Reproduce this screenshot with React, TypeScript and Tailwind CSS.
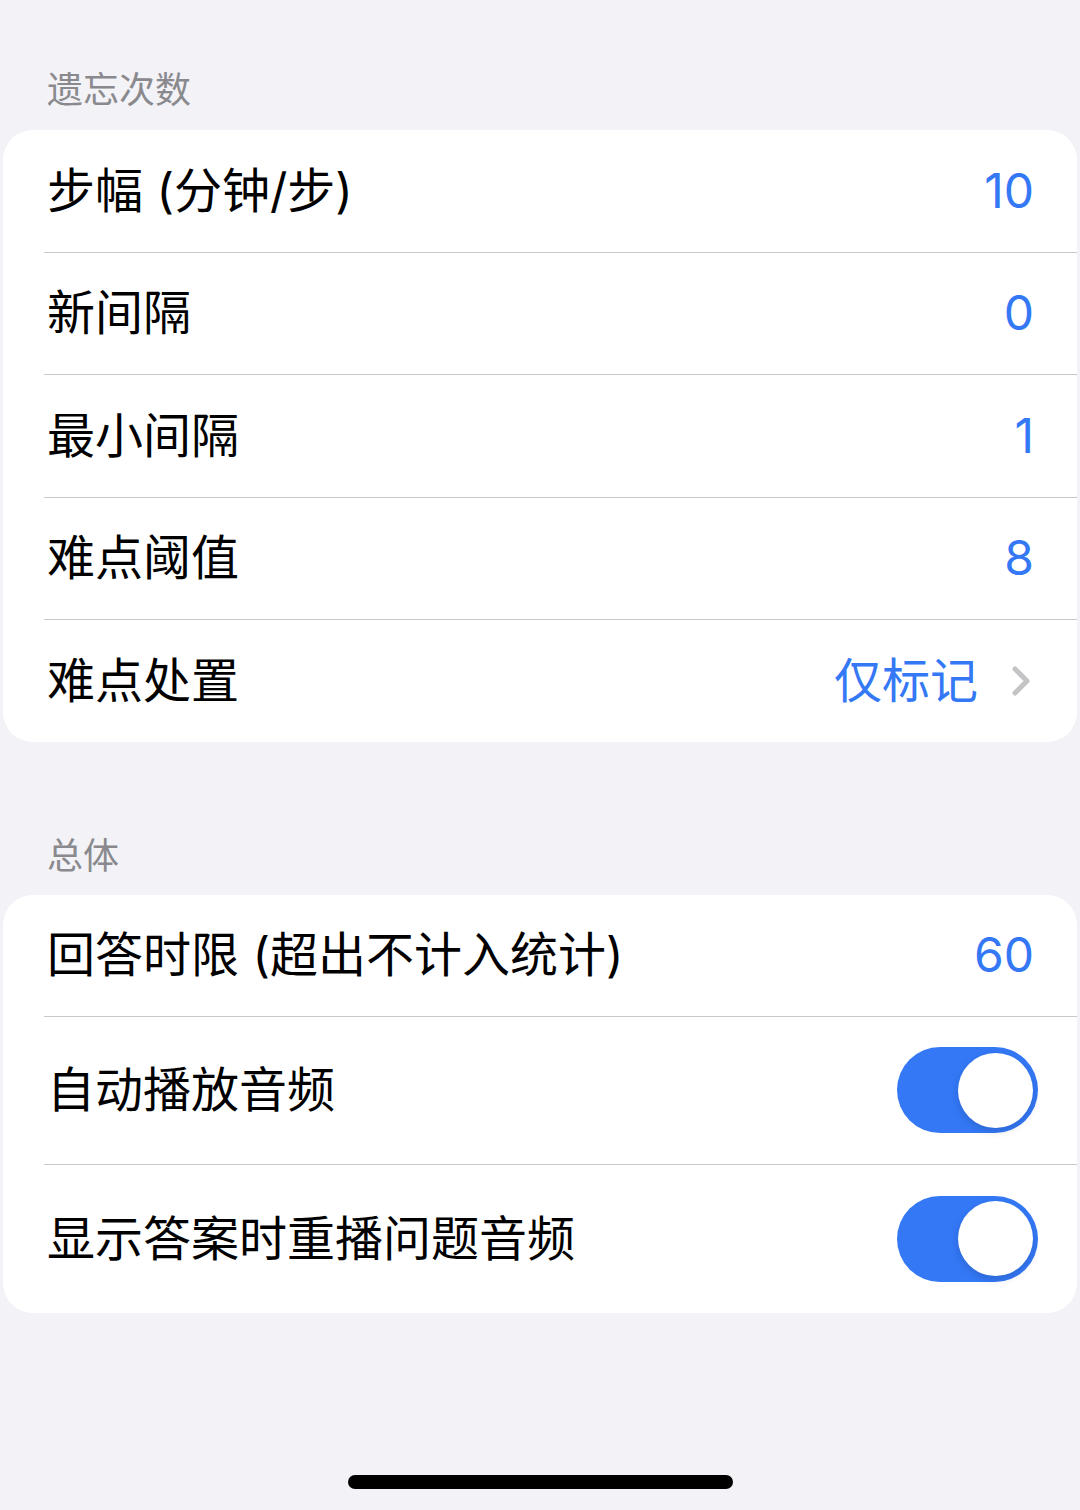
import type { ReactNode } from "react";

const font = {
  fontFamily: 'Inter, "Noto Sans CJK SC", sans-serif',
};

function SectionHeader({ title, className }: { title: string; className: string }) {
  return (
    <div className={`pl-[47px] text-[36px] leading-[36px] text-[#8a8a8e] ${className}`}>
      {title}
    </div>
  );
}

function Separator() {
  return <div className="ml-[41px] h-px bg-[#c8c8cc]" />;
}

function Row({
  label,
  height,
  children,
  pr = "pr-[43px]",
}: {
  label: string;
  height: string;
  children?: ReactNode;
  pr?: string;
}) {
  return (
    <div className={`flex items-center justify-between pl-[44px] ${pr} ${height}`}>
      <span className="text-[48px] leading-none text-black">{label}</span>
      {children}
    </div>
  );
}

function Value({ text }: { text: string }) {
  return <span className="text-[48px] leading-none text-[#3478f6]">{text}</span>;
}

function Chevron() {
  return (
    <svg width="20" height="32" viewBox="0 0 20 32" fill="none">
      <path
        d="M4 4 L16 16 L4 28"
        stroke="#c4c4c7"
        strokeWidth="5"
        strokeLinecap="round"
        strokeLinejoin="round"
      />
    </svg>
  );
}

function Toggle() {
  return (
    <div className="flex h-[86px] w-[141px] items-center justify-end rounded-full bg-[#3478f6] pr-[5px]">
      <div className="h-[75px] w-[75px] rounded-full bg-white shadow-[0_3px_8px_rgba(0,0,0,0.15)]" />
    </div>
  );
}

export default function App() {
  const rows = [
    { label: "步幅 (分钟/步)", value: "10" },
    { label: "新间隔", value: "0" },
    { label: "最小间隔", value: "1" },
    { label: "难点阈值", value: "8" },
  ];

  return (
    <div className="flex min-h-[1510px] w-[1080px] flex-col bg-[#f2f2f7]" style={font}>
      <SectionHeader title="遗忘次数" className="mb-[22px] pt-[72px]" />

      {/* Card 1 */}
      <div className="mx-[3px] overflow-hidden rounded-[30px] bg-white">
        {rows.map((r) => (
          <div key={r.label}>
            <Row label={r.label} height="h-[121.5px]">
              <Value text={r.value} />
            </Row>
            <Separator />
          </div>
        ))}
        <Row label="难点处置" height="h-[121.5px]" pr="pr-[46px]">
          <div className="flex items-center gap-[33px]">
            <Value text="仅标记" />
            <Chevron />
          </div>
        </Row>
      </div>

      <SectionHeader title="总体" className="mb-[21px] mt-[96px]" />

      {/* Card 2 */}
      <div className="mx-[3px] overflow-hidden rounded-[30px] bg-white">
        <Row label="回答时限 (超出不计入统计)" height="h-[121px]">
          <Value text="60" />
        </Row>
        <Separator />
        <Row label="自动播放音频" height="h-[147px]" pr="pr-[39px]">
          <Toggle />
        </Row>
        <Separator />
        <Row label="显示答案时重播问题音频" height="h-[148px]" pr="pr-[39px]">
          <Toggle />
        </Row>
      </div>

      {/* Home indicator */}
      <div className="mt-[162px] flex justify-center">
        <div className="h-[14px] w-[385px] rounded-full bg-black" />
      </div>
    </div>
  );
}
